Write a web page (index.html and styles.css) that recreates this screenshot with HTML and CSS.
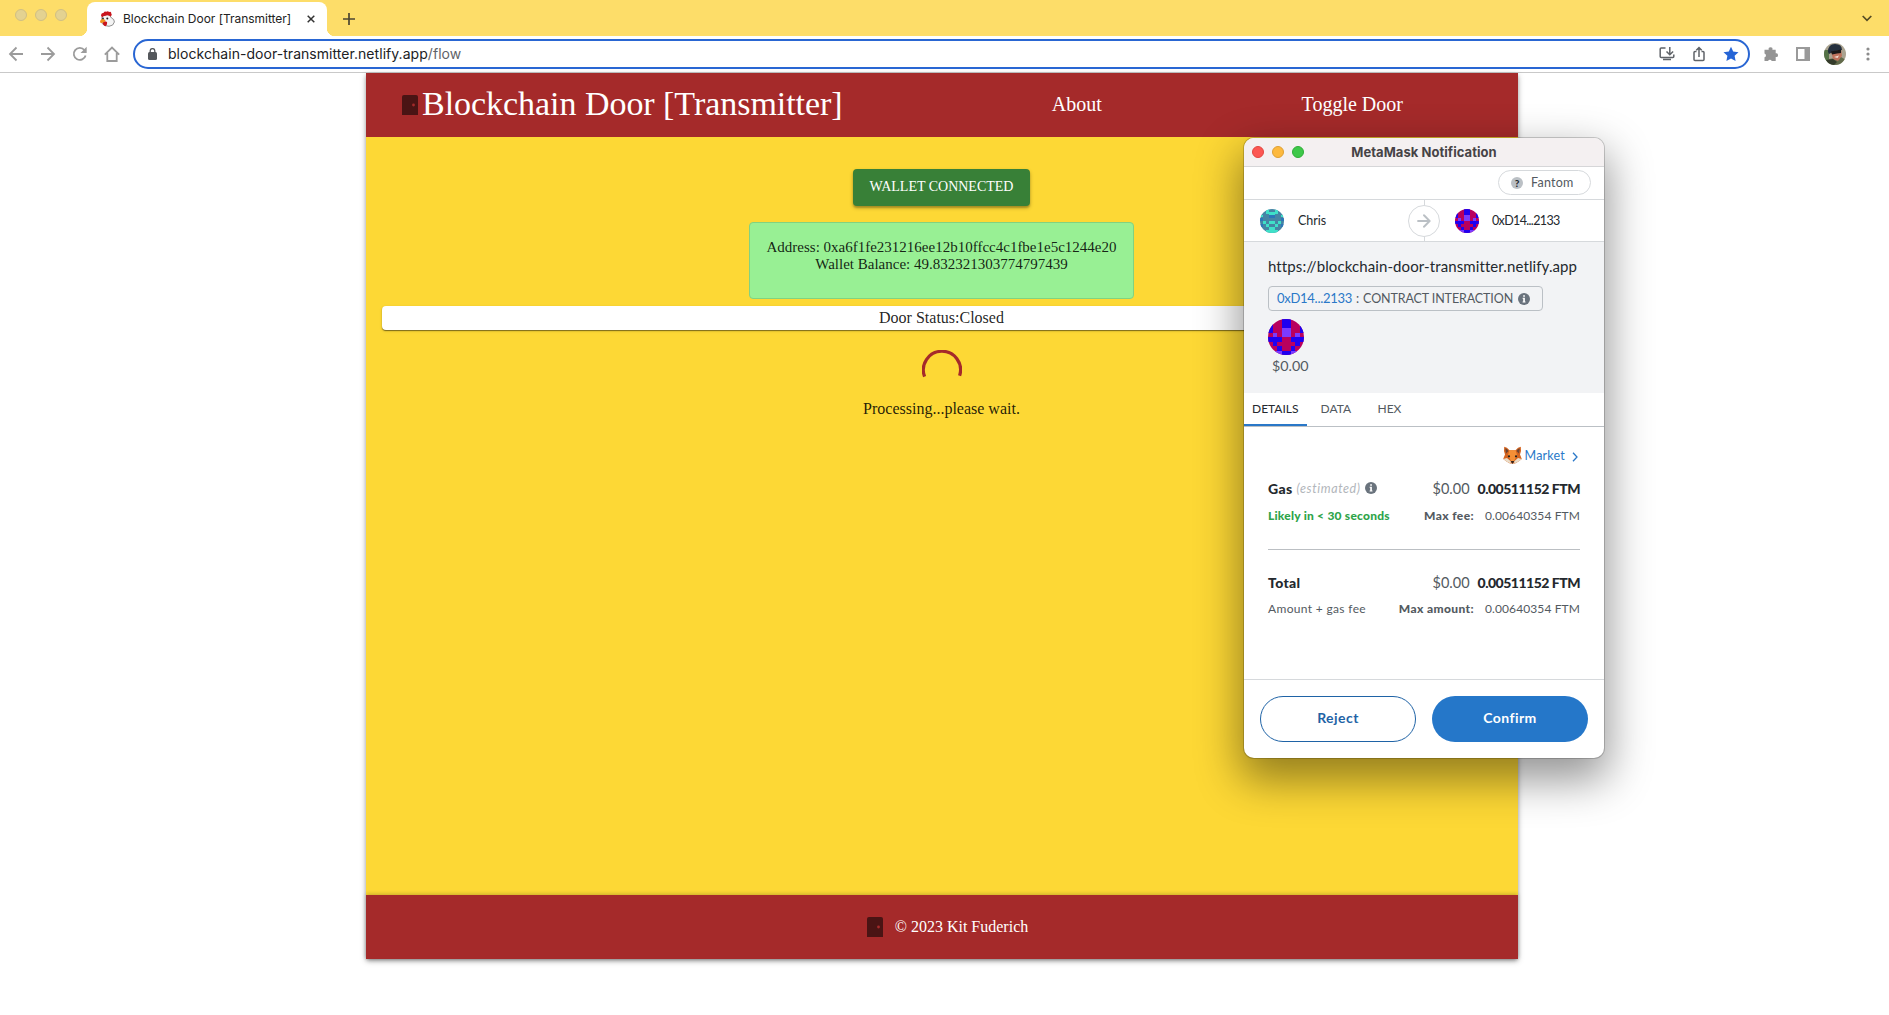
FILE: index.html
```html
<!DOCTYPE html>
<html lang="en">
<head>
<meta charset="utf-8">
<title>Blockchain Door [Transmitter]</title>
<link rel="stylesheet" href="styles.css">
</head>
<body>
<svg class="defs" aria-hidden="true">
  <symbol id="door" viewBox="0 0 16 20"><path fill="#4a1414" d="M0 20V2Q0 0 2 0H14Q16 0 16 2V20Z"/><circle cx="11.5" cy="10" r="1.4" fill="#a52a2a"/></symbol>
  <symbol id="info" viewBox="0 0 12 12"><circle cx="6" cy="6" r="6" fill="#6a737d"/><path fill="#fff" d="M5.2 2.2h1.7v1.6H5.2zM4.6 4.8h2.3v3.6h.6v1H4.6v-1h.6V5.8h-.6z"/></symbol>
  <symbol id="contract" viewBox="0 0 8 8" shape-rendering="crispEdges">
    <path fill="#b8005e" d="M0 0h8v8H0z"/>
    <path fill="#1f00f0" d="M3 0h2v2H3zM0 1h1v2H0zM7 1h1v2H7zM0 4h3v1H0zM5 4h3v1H5zM1 5h1v1H1zM6 5h1v1H6zM2 6h1v1H2zM5 6h1v1H5zM3 7h2v1H3z"/>
    <path fill="#7b3bff" d="M3 2h2v2H3zM1 3h1v1H1zM6 3h1v1H6zM1 7h2v1H1zM5 7h2v1H5z"/>
  </symbol>
  <symbol id="account" viewBox="0 0 8 8" shape-rendering="crispEdges">
    <path fill="#4685a5" d="M0 0h8v8H0z"/>
    <path fill="#3fe0c8" d="M2 0h1v1H2zM5 0h1v1H5zM3 1h2v1H3zM2 1h1v.5H2zM5 1h1v.5H5zM0 2h1v.5H0zM7 2h1v.5H7zM1 4h1v1H1zM6 4h1v1H6zM3 4h2v1H3zM2 5h1v1H2zM5 5h1v1H5zM3 6h2v1H3zM2 7h4v1H2z"/>
    <path fill="#2c77b8" d="M0 3h1v1H0zM7 3h1v1H7zM3 2h2v1H3zM0 5h1v1H0zM7 5h1v1H7z"/>
  </symbol>
</svg>

<header class="chrome">
  <div class="tabstrip">
    <div class="lights idle"><i></i><i></i><i></i></div>
    <div class="tab">
      <svg class="favicon" viewBox="0 0 16 16"><path fill="#f4f4f4" stroke="#777" stroke-width=".8" d="M3 6Q4.500 3.500 8 3.500Q11 3.500 12.500 7Q15.500 8 15.400 11Q14.500 15 10 15.300Q5 15.300 2.600 12Z"/><path fill="#c9151d" d="M2 4.500Q2 1.500 4.500 2Q5 -.3 7.300.8Q9-.4 10 1Q12.500 0 12.300 2.800Q13.500 4 11.500 5.500Q9 3.700 6.500 4.700Q4 5 3 6.500ZM3.500 11q2-1.500 4.500 0q.5 3-1.500 4.300q-2.500-.5-3-4.300Z"/><path fill="#f3941e" d="M1 10Q3 6.500 6.500 9.300Q5.500 12 1.500 12Z"/><circle cx="4" cy="7.400" r=".9" fill="#222"/><circle cx="8.300" cy="7.600" r="1" fill="#222"/></svg>
      <span class="tab-title">Blockchain Door [Transmitter]</span>
      <svg class="close" viewBox="0 0 8 8"><path d="M.7.7l6.600 6.600M7.300.7L.7 7.300" stroke="#333" stroke-width="1.500"/></svg>
    </div>
    <svg class="plus" viewBox="0 0 12 12"><path d="M6 0v12M0 6h12" stroke="#4c4632" stroke-width="1.700"/></svg>
    <svg class="chevron" viewBox="0 0 10 7"><path d="M.7 1L5 5.300 9.300 1" fill="none" stroke="#554b25" stroke-width="1.700"/></svg>
  </div>
  <div class="toolbar">
    <nav class="nav-icons">
      <svg viewBox="0 0 16 16"><path d="M15 8H2.500M8.500 1.500L2 8l6.500 6.500"/></svg>
      <svg viewBox="0 0 16 16"><path d="M1 8h12.500M7.500 1.500L14 8l-6.500 6.500"/></svg>
      <svg viewBox="0 0 16 16"><path d="M13.600 9.500A6 6 0 1 1 12.500 4.200"/><path d="M14.700.8V7H8.500Z" fill="#9b9b9b" stroke="none"/></svg>
      <svg viewBox="0 0 16 16"><path d="M.8 8.700L8 1.500l7.200 7.200M3.300 7v8h9.400V7"/></svg>
    </nav>
    <div class="omnibox">
      <svg class="lock" viewBox="0 0 9 12"><path fill="#54575b" d="M1.500 4h6Q9 4 9 5.500v5Q9 12 7.500 12h-6Q0 12 0 10.500v-5Q0 4 1.500 4Z"/><path d="M2.200 5V2.800a2.300 2.200 0 0 1 4.600 0V5" fill="none" stroke="#54575b" stroke-width="1.300"/></svg>
      <span class="url">blockchain-door-transmitter.netlify.app<em>/flow</em></span>
      <div class="omni-icons">
        <svg viewBox="0 0 16 16"><path d="M6.500 2H2.200Q1.200 2 1.200 3v7.500q0 1 1 1h11.600q1 0 1-1V8.500M10.800 1v7M7.500 5.500l3.300 3.300 3.300-3.300M4 13.500h8"/></svg>
        <svg viewBox="0 0 16 16"><path d="M5.500 5.500H4Q3 5.500 3 6.500v7q0 1 1 1h8q1 0 1-1v-7q0-1-1-1h-1.500M8 11V1.800M5.300 4.300L8 1.600l2.700 2.700"/></svg>
        <svg viewBox="0 0 16 16"><path fill="#2665d6" stroke="none" d="M8 .7l2.200 4.900 5.300.6-3.900 3.600 1 5.300L8 12.400l-4.600 2.700 1-5.300L.5 6.200l5.300-.6Z"/></svg>
      </div>
    </div>
    <div class="ext-icons">
      <svg class="puzzle" viewBox="0 0 16 16"><path fill="#949494" d="M2 3.700h3.700a1.900 1.900 0 1 1 3.700 0h3.300v3.600a1.900 1.900 0 1 1 0 3.700v4h-4a1.900 1.900 0 0 0-3.600 0H1.500v-3.700a1.900 1.900 0 0 0 0-3.700V3.700Z"/></svg>
      <svg class="panel" viewBox="0 0 14 14"><path fill="#9a9a9a" d="M0 0h14v14H0zM2 2v10h6.500V2Z" fill-rule="evenodd"/></svg>
      <svg class="avatar" viewBox="0 0 22 22"><clipPath id="round"><circle cx="11" cy="11" r="11"/></clipPath><g clip-path="url(#round)"><path fill="#aaa390" d="M0 0h22v22H0z"/><path fill="#557347" d="M0 7h5v15H0z"/><path fill="#626b4b" d="M0 22l5-6 12-2 5 3v5z"/><path fill="#bd725c" d="M7 8l10-2 1 7-4 5-5-2z"/><path fill="#25303e" d="M4 9Q4 1 11 1q7 0 7 6l-7 1-6 3z"/><path fill="#191919" d="M7 8.500l10-2v3.500l-4 .5-5 1z"/><path fill="#f2e1d7" d="M10 14l5-1.500-1.500 2.500z"/><path fill="#343b2b" d="M2 17l7-1 4 3-3 3H4z"/></g></svg>
      <svg class="dots" viewBox="0 0 4 14"><g fill="#8c8c8c"><circle cx="2" cy="2" r="1.600"/><circle cx="2" cy="7" r="1.600"/><circle cx="2" cy="12" r="1.600"/></g></svg>
    </div>
  </div>
</header>

<main class="app">
  <div class="app-header">
    <div class="brand"><svg class="door"><use href="#door"/></svg><h1>Blockchain Door [Transmitter]</h1></div>
    <a class="link">About</a>
    <a class="link">Toggle Door</a>
  </div>
  <section class="content">
    <button class="wallet">WALLET CONNECTED</button>
    <div class="account-card"><div>Address: 0xa6f1fe231216ee12b10ffcc4c1fbe1e5c1244e20</div><div>Wallet Balance: 49.832321303774797439</div></div>
    <div class="status">Door Status:Closed</div>
    <svg class="spinner" viewBox="0 0 40 40"><path d="M2.600 26.600A18.600 18.600 0 1 1 37.600 25.700" fill="none" stroke="#a52a2a" stroke-width="3.200"/></svg>
    <p class="processing">Processing...please wait.</p>
  </section>
  <footer class="app-footer"><svg class="door"><use href="#door"/></svg><span>© 2023 Kit Fuderich</span></footer>
</main>

<aside class="popup">
  <div class="popup-title"><div class="lights active"><i></i><i></i><i></i></div><span>MetaMask Notification</span></div>
  <div class="network"><div class="chip"><b>?</b><span>Fantom</span></div></div>
  <div class="parties">
    <div class="party from"><svg class="ident"><use href="#account"/></svg><span>Chris</span></div>
    <div class="arrow"><svg viewBox="0 0 14 14"><path d="M1 7h11.500M7 1.300L12.700 7 7 12.700" fill="none" stroke="#bbc0c5" stroke-width="2" stroke-linecap="round"/></svg></div>
    <div class="party to"><svg class="ident"><use href="#contract"/></svg><span class="addr">0xD14...2133</span></div>
  </div>
  <div class="summary">
    <div class="origin">https://blockchain-door-transmitter.netlify.app</div>
    <div class="badge"><span class="hash">0xD14...2133</span><span class="colon">:</span><span class="kind">CONTRACT INTERACTION</span><svg class="info"><use href="#info"/></svg></div>
    <svg class="ident large"><use href="#contract"/></svg>
    <div class="amount">$0.00</div>
  </div>
  <div class="tabs"><span class="selected">DETAILS</span><span class="data">DATA</span><span>HEX</span></div>
  <div class="details">
    <div class="row market">
      <svg class="fox" viewBox="0 0 19 19"><path fill="#d4641f" d="M1.200.8Q4 .8 6.500 4.300h6Q15 .8 17.800.8Q18.600 5 17 8.500L18.800 13 15.500 15.500 12 17.500H7L3.500 15.500.2 13 2 8.500Q.4 5 1.200.8Z"/><path fill="#6b4433" d="M2.200 2.200Q4.500 3 5.500 5L3 7.500ZM16.800 2.200Q14.500 3 13.500 5L16 7.500Z"/><path fill="#f48f36" d="M6.500 4.300h6L14 9l-3 6H8L5 9Z"/><path fill="#eadcc8" d="M.2 13l3.800-1 4 3.500-.5 2-4-2zM18.800 13l-3.800-1-4 3.500.5 2 4-2z"/><circle cx="6" cy="10.300" r="1.100" fill="#222"/><circle cx="13" cy="10.300" r="1.100" fill="#222"/><path fill="#33251f" d="M7.700 15h3.600L9.500 18z"/></svg>
      <span>Market</span>
      <svg class="next" viewBox="0 0 6 10"><path d="M1 .8L5 5 1 9.200" fill="none" stroke="#2a78c8" stroke-width="1.300"/></svg>
    </div>
    <div class="row main"><strong class="gas">Gas</strong><em>(estimated)</em><svg class="info"><use href="#info"/></svg><span class="fiat">$0.00</span><strong class="token">0.00511152 FTM</strong></div>
    <div class="row sub"><b class="likely">Likely in &lt; 30 seconds</b><b class="label fee">Max fee:</b><span class="value">0.00640354 FTM</span></div>
    <hr>
    <div class="row main"><strong class="total">Total</strong><span class="fiat">$0.00</span><strong class="token">0.00511152 FTM</strong></div>
    <div class="row sub last"><span class="note">Amount + gas fee</span><b class="label max">Max amount:</b><span class="value">0.00640354 FTM</span></div>
  </div>
  <div class="actions"><button class="reject">Reject</button><button class="confirm">Confirm</button></div>
</aside>
</body>
</html>
```
FILE: styles.css
```css
* { box-sizing: border-box; }
body { margin: 0; height: 1015px; overflow: hidden; background: #fff; font-family: Inter, sans-serif; color: #24292e; }
svg { display: block; flex: none; }
.defs { position: absolute; width: 0; height: 0; }
button { border: 0; padding: 0; margin: 0; }

/* Browser frame */
.chrome { height: 73px; border-bottom: 1px solid #c9c9c9; background: #fff; }
.tabstrip { display: flex; height: 36px; background: #fddd69; }
.lights { display: flex; gap: 8px; }
.lights i { width: 12px; height: 12px; border-radius: 50%; border: 1px solid #d0bf83; background: #e3d291; }
.idle { padding: 9px 0 0 15px; width: 87px; }
.tab { position: relative; display: flex; align-items: center; width: 240px; height: 34px; margin-top: 2px; padding: 0 12px; border-radius: 8px 8px 0 0; background: #fff; }
.tab::before, .tab::after { content: ""; position: absolute; bottom: 0; width: 8px; height: 8px; }
.tab::before { left: -8px; background: radial-gradient(circle at 0 0, #fddd69 8px, #fff 8.500px); }
.tab::after { right: -8px; background: radial-gradient(circle at 100% 0, #fddd69 8px, #fff 8.500px); }
.favicon { width: 16px; height: 16px; }
.tab-title { margin-left: 8px; padding-bottom: 1px; font-size: 12px; letter-spacing: -.030px; white-space: nowrap; color: #222; }
.close { width: 8px; height: 8px; margin-left: auto; }
.plus { width: 12px; height: 12px; margin: 13px 0 0 16px; }
.chevron { width: 10px; height: 7px; margin: 15px 17px 0 auto; }
.toolbar { display: flex; align-items: center; height: 36px; }
.nav-icons { display: flex; gap: 16px; padding-left: 8px; width: 133px; }
.nav-icons svg { width: 16px; height: 16px; fill: none; stroke: #9b9b9b; stroke-width: 1.800px; }
.omnibox { display: flex; align-items: center; width: 1617px; height: 30px; border: 2px solid #2966d3; border-radius: 15px; padding: 0 9px 0 13px; }
.lock { width: 9px; height: 12px; margin-bottom: 1px; }
.url { margin-left: 11px; padding-bottom: 2px; font-size: 14px; letter-spacing: .045px; color: #202124; }
.url em { font-style: normal; color: #5f6368; }
.omni-icons { display: flex; gap: 16px; margin-left: auto; }
.omni-icons svg { width: 16px; height: 16px; fill: none; stroke: #5f6368; stroke-width: 1.500px; }
.ext-icons { display: flex; align-items: center; }
.puzzle { width: 16px; height: 16px; margin-left: 13px; }
.panel { width: 14px; height: 14px; margin-left: 17px; }
.avatar { width: 22px; height: 22px; margin-left: 14px; }
.dots { width: 4px; height: 14px; margin-left: 20px; }

/* Web app */
.app { width: 1152px; height: 886px; margin-left: 366px; display: flex; flex-direction: column; font-family: "Liberation Serif", "Times New Roman", serif; background: #fdd835; box-shadow: 0 2px 4px -1px rgba(0,0,0,.3), 0 2px 6px rgba(0,0,0,.28); }
.app-header { height: 64px; flex: none; display: grid; grid-template-columns: 1fr 275.500px 275.500px; align-items: center; padding: 0 28px 0 36px; background: #a52a2a; color: #fff; }
.brand { display: flex; align-items: center; gap: 4px; }
.door { width: 16px; height: 20px; }
h1 { margin: 0; padding-bottom: 3px; font-size: 34px; line-height: 40px; font-weight: 400; letter-spacing: -.040px; white-space: nowrap; }
.link { text-align: center; font-size: 20px; line-height: 24px; padding-bottom: 2px; }
.content { flex: 1; display: flex; flex-direction: column; align-items: center; padding: 32px 17px 0 16px; color: rgba(0,0,0,.87); }
.wallet { width: 177px; height: 37px; padding-bottom: 2px; border-radius: 4px; background: #388037; color: #fff; font: 14px "Liberation Serif", serif; letter-spacing: -.010px; box-shadow: 0 2px 2px rgba(0,0,0,.22), 0 2px 4px rgba(0,0,0,.2); }
.account-card { width: 385px; height: 77px; margin-top: 16px; padding-top: 16px; border: 1px solid #82d280; border-radius: 4px; background: #98f094; text-align: center; font-size: 15px; line-height: 17px; white-space: nowrap; }
.status { align-self: stretch; height: 24px; margin-top: 7px; border-radius: 4px; background: #fff; text-align: center; font-size: 16px; line-height: 23px; box-shadow: 0 1px 1px rgba(0,0,0,.45), 0 1px 3px rgba(0,0,0,.15); }
.spinner { width: 40px; height: 40px; margin-top: 20px; }
.processing { margin: 10px 0 0; font-size: 16px; line-height: 18px; }
.app-footer { height: 64px; flex: none; display: flex; align-items: center; justify-content: center; gap: 12px; padding-left: 11px; background: #a52a2a; color: #fff; font-size: 16px; box-shadow: 0 -1px 4px rgba(0,0,0,.22); }

/* Wallet window */
.popup { position: absolute; left: 1244px; top: 138px; width: 360px; height: 620px; display: flex; flex-direction: column; overflow: hidden; border-radius: 10px; background: #fff; font-family: Lato, sans-serif; font-size: 12.500px; box-shadow: 0 0 0 1px rgba(0,0,0,.18), 0 18px 44px 4px rgba(0,0,0,.42); }
.popup > * { flex: none; }
.popup-title { display: grid; grid-template-columns: 60px 1fr 60px; align-items: center; height: 29px; padding: 0 8px; border-bottom: 1px solid #d6d6d8; background: #f4f0f1; font-family: Inter, sans-serif; font-size: 13px; font-weight: 700; letter-spacing: .050px; text-align: center; color: #464346; }
.popup-title span { padding-bottom: 1px; }
.active i:nth-child(1) { background: #fc5753; border-color: #e2463f; }
.active i:nth-child(2) { background: #fdb93e; border-color: #dfa033; }
.active i:nth-child(3) { background: #3ec849; border-color: #2fae38; }
.network { display: flex; justify-content: flex-end; height: 33px; padding: 3px 13px 0; border-bottom: 1px solid #d6d9dc; }
.chip { display: flex; align-items: center; width: 93px; height: 25px; padding-left: 12px; border: 1px solid #d6d9dc; border-radius: 13px; color: #535a61; letter-spacing: .250px; }
.chip span { padding-bottom: 1px; }
.chip b { width: 12px; height: 12px; margin-right: 8px; border-radius: 50%; background: #bbc0c5; color: #24292e; font-size: 10px; font-weight: 900; line-height: 12px; text-align: center; letter-spacing: 0; }
.parties { display: grid; grid-template-columns: 164px 32px 1fr; height: 42px; border-bottom: 1px solid #d6d9dc; align-items: center; }
.party { display: flex; align-items: center; gap: 14px; }
.party span { padding-bottom: 1px; }
.from { padding-left: 16px; }
.to { padding-left: 15px; gap: 13px; }
.addr { font-size: 12.500px; letter-spacing: -.640px; }
.ident { width: 24px; height: 24px; border-radius: 50%; overflow: hidden; }
.arrow { display: flex; align-items: center; justify-content: center; height: 41px; background: linear-gradient(#d6d9dc, #d6d9dc) center / 1px 100% no-repeat; }
.arrow svg { width: 32px; height: 32px; padding: 8px; border: 1px solid #d6d9dc; border-radius: 50%; background: #fff; }
.summary { height: 151px; padding: 14px 24px 0; background: #f2f3f5; }
.origin { font-size: 15px; line-height: 20px; letter-spacing: .100px; white-space: nowrap; }
.badge { display: flex; align-items: center; width: 275px; height: 25px; margin-top: 10px; padding: 0 12px 0 8px; border: 1px solid #bbc0c5; border-radius: 4px; white-space: nowrap; color: #535a61; }
.badge span { padding-bottom: 1px; }
.hash { font-size: 13px; letter-spacing: -.270px; color: #2a78c8; }
.colon { width: 11px; text-align: center; }
.kind { font-size: 12.500px; letter-spacing: -.110px; }
.info { width: 12px; height: 12px; }
.badge .info { margin-left: auto; }
.large { width: 36px; height: 36px; margin-top: 8px; }
.amount { padding-left: 4px; font-size: 14.300px; line-height: 22px; color: #535a61; }
.tabs { display: flex; height: 34px; border-bottom: 1px solid #bbc0c5; color: #535a61; font-size: 12px; line-height: 32px; }
.tabs span { height: 33px; padding-left: 8.500px; }
.tabs .selected { width: 63px; margin-right: 5px; padding-left: 8px; border-bottom: 2px solid #2a78c8; color: #24292e; letter-spacing: 0; }
.tabs .data { width: 57px; }
.details { height: 252px; padding: 12px 24px 0; }
.row { display: flex; align-items: center; white-space: nowrap; }
.market { height: 32px; justify-content: flex-end; color: #2a78c8; letter-spacing: .2px; }
.fox { width: 19px; height: 19px; margin-right: 3px; }
.next { width: 6px; height: 10px; margin: 3px 2px 0 7px; }
.main { height: 34px; font-size: 14px; }
.gas, .total { font-weight: 900; letter-spacing: .350px; }
.main em { margin: 1px 4px 0 4px; font-size: 12.500px; letter-spacing: .600px; color: #b2b6bb; }
.main .info { margin-bottom: 1px; }
.fiat { margin-left: auto; font-size: 14.500px; color: #535a61; }
.token { margin-left: 8px; font-weight: 900; letter-spacing: -.500px; }
.sub { height: 20px; color: #535a61; font-size: 12px; }
.likely { letter-spacing: .230px; font-weight: 900; color: #2ea44a; }
.label { margin-left: auto; font-weight: 900; letter-spacing: .380px; }
.value { margin-left: 11px; letter-spacing: .103px; }
.note { letter-spacing: .335px; }
.last { height: 18px; }
hr { height: 1px; margin: 24px 0 15px; border: 0; background: #bbbfc3; }
.actions { display: flex; gap: 16px; height: 79px; padding: 16px; border-top: 1px solid #d6d9dc; }
.actions button { width: 156px; height: 46px; padding-bottom: 3px; border-radius: 23px; font: 700 14px Lato, sans-serif; letter-spacing: .450px; }
.reject { border: 1px solid #1f63a6; background: #fff; color: #1f63a6; }
.confirm { background: #2577c9; color: #fff; }
```
